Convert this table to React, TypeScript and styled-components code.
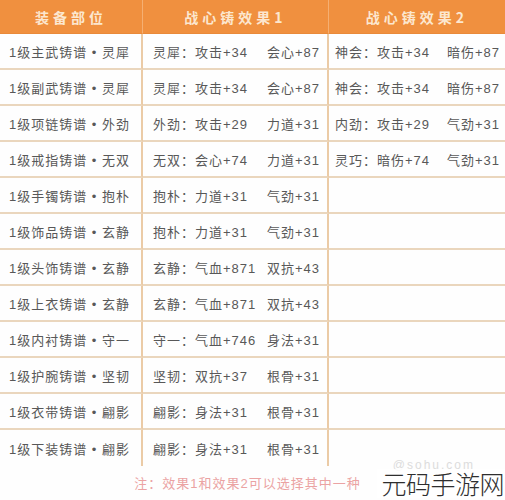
import React from "react";
import styled, { createGlobalStyle } from "styled-components";

const Global = createGlobalStyle`
  html, body {
    margin: 0;
    padding: 0;
    background: #ffffff;
  }
  body {
    font-family: "Liberation Sans", "Noto Sans CJK SC", sans-serif;
  }
`;

const Page = styled.div`
  position: relative;
  width: 505px;
  height: 500px;
  overflow: hidden;
  background: #fefefe;
`;

const Table = styled.div`
  display: grid;
  grid-template-columns: 143px 186px 176px;
`;

const HeadCell = styled.div<{ $last?: boolean }>`
  height: 34px;
  display: flex;
  align-items: center;
  justify-content: center;
  background: #f0903f;
  color: #fce7cf;
  font-family: "Noto Sans CJK SC", sans-serif;
  font-weight: 700;
  font-size: 14px;
  letter-spacing: 4px;
  border-right: ${(p) => (p.$last ? "none" : "1px solid rgba(255, 235, 210, 0.35)")};
  border-bottom: 1px solid #e98a3a;
  box-sizing: border-box;
`;

const Cell = styled.div<{ $last?: boolean; $pad: number; $first: number }>`
  height: 36px;
  box-sizing: border-box;
  display: grid;
  grid-template-columns: ${(p) => p.$first}px auto;
  align-items: center;
  padding-left: ${(p) => p.$pad}px;
  border-bottom: 2px solid #ead6bd;
  border-right: ${(p) => (p.$last ? "none" : "2px solid #ebcba6")};
  color: #585858;
  font-size: 13px;
  letter-spacing: 1px;
  white-space: nowrap;
`;

const LastRowCell = styled(Cell)`
  border-bottom: none;
`;

const Note = styled.div`
  height: 32px;
  display: flex;
  align-items: center;
  justify-content: center;
  padding-right: 10px;
  color: #eba3a3;
  font-size: 13px;
  letter-spacing: 1px;
`;

const Watermark = styled.div`
  position: absolute;
  right: 0;
  bottom: 2px;
  font-family: "Noto Sans CJK SC", sans-serif;
  font-weight: 300;
  font-size: 25px;
  color: #2e2e2e;
  background: rgba(255, 255, 255, 0.85);
  padding: 0 1px 0 4px;
  line-height: 29px;
  letter-spacing: -0.5px;
`;

const Ghost = styled.div`
  position: absolute;
  right: 30px;
  bottom: 28px;
  font-size: 12px;
  color: #dcdcdc;
  letter-spacing: 2px;
`;

type Row = { part: string; e1: [string, string]; e2?: [string, string] };

const rows: Row[] = [
  { part: "1级主武铸谱 • 灵犀", e1: ["灵犀：攻击+34", "会心+87"], e2: ["神会：攻击+34", "暗伤+87"] },
  { part: "1级副武铸谱 • 灵犀", e1: ["灵犀：攻击+34", "会心+87"], e2: ["神会：攻击+34", "暗伤+87"] },
  { part: "1级项链铸谱 • 外劲", e1: ["外劲：攻击+29", "力道+31"], e2: ["内劲：攻击+29", "气劲+31"] },
  { part: "1级戒指铸谱 • 无双", e1: ["无双：会心+74", "力道+31"], e2: ["灵巧：暗伤+74", "气劲+31"] },
  { part: "1级手镯铸谱 • 抱朴", e1: ["抱朴：力道+31", "气劲+31"] },
  { part: "1级饰品铸谱 • 玄静", e1: ["抱朴：力道+31", "气劲+31"] },
  { part: "1级头饰铸谱 • 玄静", e1: ["玄静：气血+871", "双抗+43"] },
  { part: "1级上衣铸谱 • 玄静", e1: ["玄静：气血+871", "双抗+43"] },
  { part: "1级内衬铸谱 • 守一", e1: ["守一：气血+746", "身法+31"] },
  { part: "1级护腕铸谱 • 坚韧", e1: ["坚韧：双抗+37", "根骨+31"] },
  { part: "1级衣带铸谱 • 翩影", e1: ["翩影：身法+31", "根骨+31"] },
  { part: "1级下装铸谱 • 翩影", e1: ["翩影：身法+31", "根骨+31"] },
];

export default function App() {
  return (
    <Page>
      <Global />
      <Table>
        <HeadCell>装备部位</HeadCell>
        <HeadCell>战心铸效果1</HeadCell>
        <HeadCell $last>战心铸效果2</HeadCell>
        {rows.map((r, i) => {
          const C = i === rows.length - 1 ? LastRowCell : Cell;
          return (
            <React.Fragment key={i}>
              <C $pad={9} $first={200}>
                <span>{r.part}</span>
              </C>
              <C $pad={10} $first={114}>
                <span>{r.e1[0]}</span>
                <span>{r.e1[1]}</span>
              </C>
              <C $last $pad={6} $first={112}>
                <span>{r.e2 ? r.e2[0] : ""}</span>
                <span>{r.e2 ? r.e2[1] : ""}</span>
              </C>
            </React.Fragment>
          );
        })}
      </Table>
      <Note>注：效果1和效果2可以选择其中一种</Note>
      <Ghost>@sohu.com</Ghost>
      <Watermark>元码手游网</Watermark>
    </Page>
  );
}
